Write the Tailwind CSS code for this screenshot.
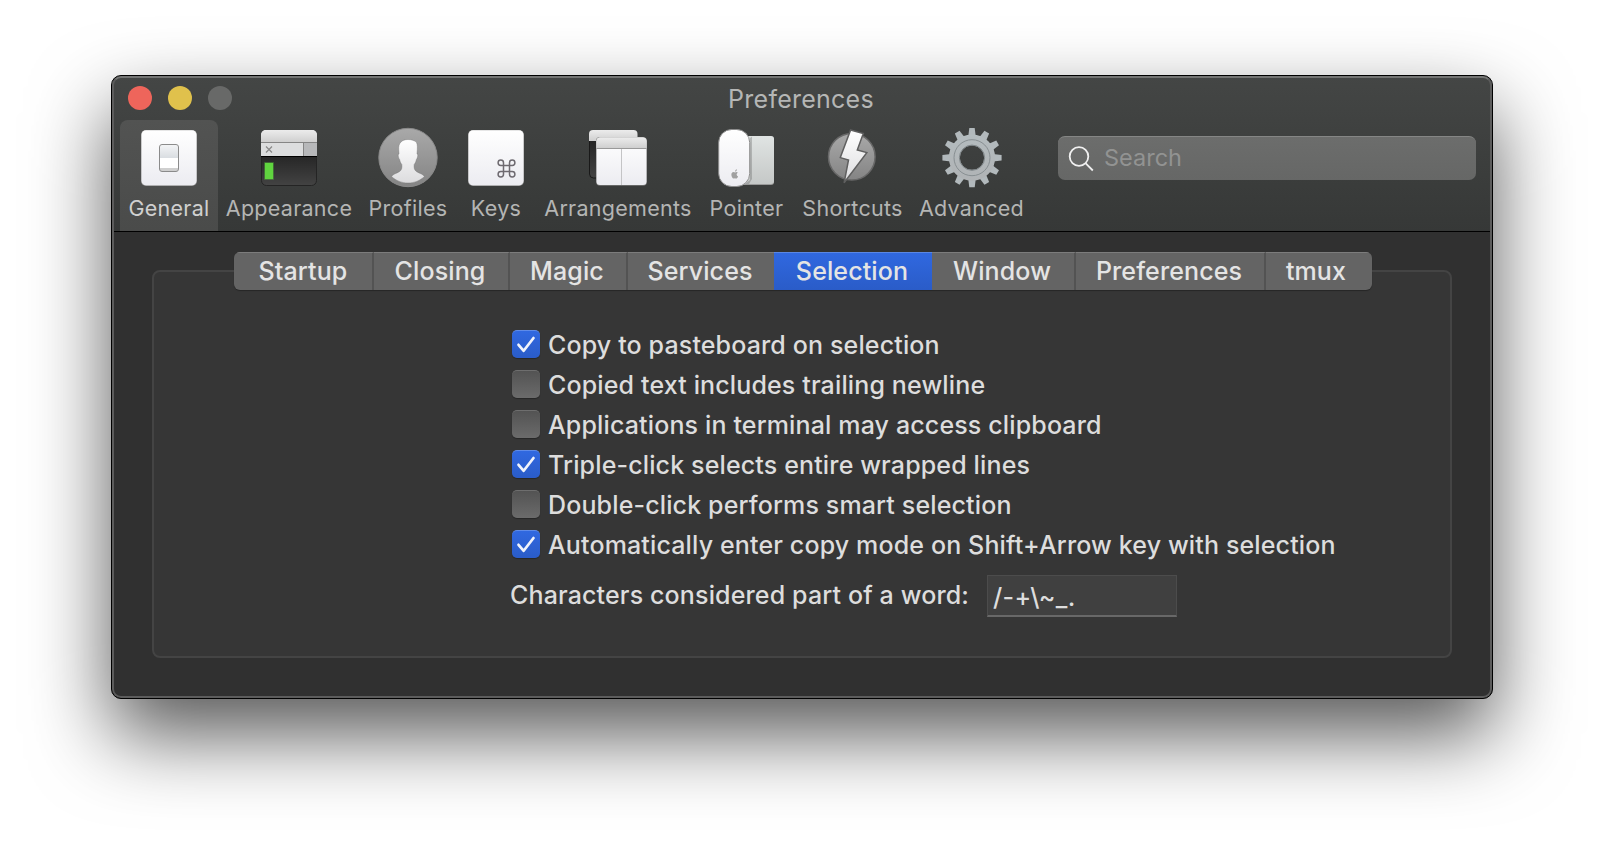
<!DOCTYPE html>
<html lang="en">
<head>
<meta charset="utf-8">
<title>Preferences</title>
<script src="https://cdn.jsdelivr.net/npm/@tailwindcss/browser@4"></script>
</head>
<body class="h-[846px] w-[1604px] overflow-hidden bg-white pt-[75px] pl-[111px] font-[Inter,sans-serif]">
<main class="relative flex h-[624px] w-[1382px] flex-col overflow-hidden rounded-[10px] border border-black bg-[#303030] shadow-[0_36px_80px_rgba(0,0,0,0.66)]">
  <div class="pointer-events-none absolute inset-0 z-10 rounded-[9px] border-2 border-[#5c5c5c] border-t-[#747574]"></div>

  <header class="h-[156px] shrink-0 border-b border-black bg-linear-to-b from-[#444645] to-[#363837]">
    <div class="grid h-11 grid-cols-[1fr_auto_1fr] items-center pl-4">
      <div class="flex gap-4">
        <span class="size-6 rounded-full bg-[#ee655b]"></span>
        <span class="size-6 rounded-full bg-[#e0c14c]"></span>
        <span class="size-6 rounded-full bg-[#686968]"></span>
      </div>
      <h1 class="pt-0.5 pr-[18px] text-[25px] leading-7 tracking-[0.25px] text-[#b5b6b5]">Preferences</h1>
    </div>
    <div class="flex h-[111px] pl-2">
      <nav class="flex text-[21.5px] leading-7 tracking-[0.28px] whitespace-nowrap text-[#b4b5b4]">
        <a class="flex w-[98px] flex-col items-center rounded-t-lg bg-linear-to-b from-[#525352] to-[#4a4b4a] pt-1.5 text-[#d0d0d0]">
          <svg class="size-16" viewBox="0 0 64 64"><defs><linearGradient id="key" x2="0" y2="1"><stop stop-color="#fff"/><stop offset="1" stop-color="#ececf1"/></linearGradient><linearGradient id="bar" x2="0" y2="1"><stop stop-color="#ececec"/><stop offset="1" stop-color="#cfcfcf"/></linearGradient><linearGradient id="sw" x2="0" y2="1"><stop stop-color="#f3f4f6"/><stop offset="1" stop-color="#d9dde1"/></linearGradient></defs>
            <rect x="4" y="4" width="56" height="56" rx="5" fill="#9a9a9a"/><rect x="4.500" y="4.200" width="55" height="55" rx="4.500" fill="url(#key)"/>
            <rect x="22.500" y="18.500" width="19" height="27" rx="2.500" fill="#fff"/><path d="M23 32V21a2 2 0 0 1 2-2h14a2 2 0 0 1 2 2v11z" fill="url(#sw)"/><path d="M23 42h18v1.500a2 2 0 0 1-2 2H25a2 2 0 0 1-2-2z" fill="#cfcfcf"/><rect x="22.500" y="18.500" width="19" height="27" rx="2.500" fill="none" stroke="#8b8b8b"/></svg>
          <span class="mt-1">General</span></a>
        <a class="flex w-[142px] flex-col items-center pt-1.5">
          <svg class="size-16" viewBox="0 0 64 64"><defs><linearGradient id="term" x2="0" y2="1"><stop stop-color="#1e1e1e"/><stop offset="1" stop-color="#434343"/></linearGradient></defs>
            <rect x="4.500" y="22" width="55" height="37.500" rx="5" fill="url(#term)" stroke="#242424"/><path d="M4 30V9a5 5 0 0 1 5-5h46a5 5 0 0 1 5 5v21z" fill="#dcddde"/><path d="M4 16V9a5 5 0 0 1 5-5h46a5 5 0 0 1 5 5v7z" fill="url(#bar)"/><path d="M46.500 17H60v13H46.500z" fill="#b7b8ba"/><path d="M4 16.500h56M46.500 17v13" stroke="#858585" fill="none"/><path d="M4 30.500h56" stroke="#000"/><path d="M9 20.500l6 6m0-6l-6 6" stroke="#888" stroke-width="1.200"/><rect x="7" y="36" width="10" height="18" rx="1" fill="#5cd53b" opacity=".35"/><rect x="8" y="37" width="8" height="16" fill="#60d43f"/></svg>
          <span class="mt-1">Appearance</span></a>
        <a class="flex w-[96px] flex-col items-center pt-1.5">
          <svg class="size-16" viewBox="0 0 64 64"><defs><linearGradient id="disc" x2="0" y2="1"><stop stop-color="#a9a9a9"/><stop offset="1" stop-color="#848484"/></linearGradient><linearGradient id="bust" x2="0" y2="1"><stop stop-color="#fff"/><stop offset="1" stop-color="#dcdcde"/></linearGradient></defs>
            <circle cx="32" cy="31.500" r="29.200" fill="url(#disc)" stroke="#8a8a8a"/>
            <path d="M32 13.500c4.200 0 6 1.400 7.200 1.800 2 1 2.400 4 2.100 8.400l-.3 4.300c1.300 0 .9 3.300-.6 5.500-.5 2.300-1 3.400-2.200 5-.4 3.600.2 5.700 2.500 7.200 2.900 1.700 6.200 2.400 7.800 4.700C44 54.700 38.200 57 32 57s-12-2.300-16.500-6.600c1.600-2.300 4.900-3 7.800-4.700 2.300-1.500 2.900-3.600 2.500-7.200-1.200-1.600-1.700-2.700-2.200-5-1.500-2.200-1.900-5.500-.6-5.500l-.3-4.300c-.5-6.500 3-10.200 9.300-10.200z" fill="url(#bust)" stroke="#6f6f6f" stroke-opacity=".5" stroke-width=".8"/></svg>
          <span class="mt-1">Profiles</span></a>
        <a class="flex w-[80px] flex-col items-center pt-1.5">
          <svg class="size-16" viewBox="0 0 64 64"><rect x="4" y="4" width="56" height="56" rx="5" fill="#9a9a9a"/><rect x="4.500" y="4.200" width="55" height="55" rx="4.500" fill="url(#key)"/>
            <path d="M39.500 39.500h6v6h-6zM39.500 39.500h-2.700a2.700 2.700 0 1 1 2.700-2.700zM45.500 39.500v-2.700a2.700 2.700 0 1 1 2.700 2.700zM45.500 45.500h2.700a2.700 2.700 0 1 1-2.700 2.700zM39.500 45.500v2.700a2.700 2.700 0 1 1-2.700-2.700z" fill="none" stroke="#6e6a70" stroke-width="1.500"/></svg>
          <span class="mt-1">Keys</span></a>
        <a class="flex w-[164px] flex-col items-center pt-1.5">
          <svg class="size-16" viewBox="0 0 64 64"><rect x="3.500" y="4.500" width="47" height="47.500" rx="4" fill="url(#term)" stroke="#191919"/><path d="M3 15V8a4 4 0 0 1 4-4h40.500a4 4 0 0 1 4 4v7z" fill="url(#bar)"/><rect x="10" y="11" width="51" height="48.800" rx="4" fill="#777"/><rect x="10.500" y="11.500" width="50" height="47.500" rx="3.500" fill="url(#key)"/><path d="M10.500 22v-6.500a4 4 0 0 1 4-4h42a4 4 0 0 1 4 4V22z" fill="url(#bar)"/><path d="M10.500 22.500h50" stroke="#999"/><path d="M35.500 23v36" stroke="#c4c4c6"/></svg>
          <span class="mt-1">Arrangements</span></a>
        <a class="flex w-[93px] flex-col items-center pt-1.5">
          <svg class="size-16" viewBox="0 0 64 64"><defs><linearGradient id="pad" x2="0" y2="1"><stop stop-color="#e0e4e3"/><stop offset="1" stop-color="#c5c8c7"/></linearGradient></defs>
            <rect x="20" y="10.500" width="39" height="48.500" rx="3" fill="#999"/><rect x="20" y="10" width="39" height="48" rx="3" fill="url(#pad)"/><path d="M35 12v42l-5 4h4l3-5V10.500z" fill="#555" opacity=".3"/><rect x="3.700" y="3.500" width="31" height="57" rx="13" fill="url(#key)" stroke="#8d8d8d"/>
            <path transform="translate(4.100 8.600) scale(.84)" d="M22.200 45.300c-1 .6-1.400 1.400-1.300 2.400.1 1 .7 1.700 1.700 2.100-.6 1.500-1.300 2.500-2.200 2.500-.6 0-.9-.4-1.600-.4s-1 .4-1.500.4c-1.300 0-2.700-2.500-2.700-4.600 0-2 1.200-3.200 2.500-3.200.8 0 1.300.5 1.900.5.500 0 1.100-.5 2-.5.500 0 1 .3 1.200.8zM19 44c0-1.500 1-2.500 2.200-2.800C21.200 42.800 20.200 43.900 19 44z" fill="#a0a0a0"/></svg>
          <span class="mt-1">Pointer</span></a>
        <a class="flex w-[119px] flex-col items-center pt-1.5">
          <svg class="size-16" viewBox="0 0 64 64"><g transform="translate(-.7 0)"><circle cx="31.500" cy="30.700" r="23.300" fill="url(#disc)" stroke="#686868" stroke-width="1.500"/><path d="M30.300 4l12.700 3.500-6 16.600 9.500 2.500-22.700 30.200L28.200 34l-8.200-2.400z" fill="url(#bust)" stroke="#5f5f5f" stroke-width="1.500"/></g></svg>
          <span class="mt-1">Shortcuts</span></a>
        <a class="flex w-[119px] flex-col items-center pt-1.5">
          <svg class="size-16" viewBox="0 0 64 64"><defs><linearGradient id="gear" gradientUnits="userSpaceOnUse" x1="0" y1="-24" x2="0" y2="24"><stop stop-color="#b4bcbf"/><stop offset="1" stop-color="#b0b3b5"/></linearGradient><path id="tooth" d="M-3.800 -21L-2.700 -29.600H2.700L3.800 -21z"/></defs>
            <g transform="translate(32 31.700)"><g fill="#b2b9bc"><use href="#tooth"/><use href="#tooth" transform="rotate(30)"/><use href="#tooth" transform="rotate(60)"/><use href="#tooth" transform="rotate(90)"/><use href="#tooth" transform="rotate(120)"/><use href="#tooth" transform="rotate(150)"/><use href="#tooth" transform="rotate(180)"/><use href="#tooth" transform="rotate(210)"/><use href="#tooth" transform="rotate(240)"/><use href="#tooth" transform="rotate(270)"/><use href="#tooth" transform="rotate(300)"/><use href="#tooth" transform="rotate(330)"/></g>
            <circle r="17.600" fill="none" stroke="url(#gear)" stroke-width="11"/><circle r="18" fill="none" stroke="#888f92" stroke-width="1"/><circle r="12.600" fill="none" stroke="#7c8386" stroke-width="1"/></g></svg>
          <span class="mt-1">Advanced</span></a>
      </nav>
      <div class="mt-4 ml-[27px] flex h-11 w-[418px] items-center rounded-[7px] border-t border-[#858685] bg-linear-to-b from-[#6c6d6c] to-[#666766] pl-2.5 text-[23.5px] leading-7 text-[#929392]">
        <svg class="size-7" viewBox="0 0 28 28" fill="none" stroke="#f0f0f0" stroke-width="1.800"><circle cx="11" cy="11.500" r="9.300"/><path d="M17.500 18.200l7.300 7.300"/></svg>
        <span class="ml-2 pb-0.5">Search</span>
      </div>
    </div>
  </header>

  <section class="flex flex-1 flex-col px-10 pt-5">
    <div class="relative z-10 ml-[82px] flex h-[38px] w-[1138px] overflow-hidden rounded-[6px] bg-[#646464] text-center text-[25px] leading-[37px] font-medium tracking-[0.12px] text-[#e4e4e4] shadow-[0_1px_1px_rgba(0,0,0,0.3)]">
      <div class="w-[140px] border-t border-r-2 border-t-[#7c7c7c] border-r-[#535353]">Startup</div>
      <div class="w-[136px] border-t border-r-2 border-t-[#7c7c7c] border-r-[#535353] pr-0.5">Closing</div>
      <div class="w-[118px] border-t border-r-2 border-t-[#7c7c7c] border-r-[#535353] pr-0.5">Magic</div>
      <div class="w-[146px] border-t border-[#7c7c7c] pr-0.5">Services</div>
      <div class="w-[158px] border-t border-[#5a87e4] bg-linear-to-b from-[#3068e0] to-[#2a5cc8] pr-0.5">Selection</div>
      <div class="w-[144px] border-t border-r-2 border-t-[#7c7c7c] border-r-[#535353] pr-0.5">Window</div>
      <div class="w-[190px] border-t border-r-2 border-t-[#7c7c7c] border-r-[#535353] pr-0.5">Preferences</div>
      <div class="w-[106px] border-t border-[#7c7c7c] pr-1.5">tmux</div>
    </div>
    <div class="-mt-5 h-[388px] w-[1300px] rounded-lg border-2 border-[#444444] bg-[#363636] pt-[58px] pl-[358px] text-[25px] leading-7 font-medium tracking-[0.14px] whitespace-nowrap text-[#dddddd]">
      <div class="flex flex-col gap-3">
        <label class="flex h-7 gap-2"><svg class="size-7 rounded-[5px] border-t border-[#5f8be8] bg-linear-to-b from-[#3068e0] to-[#2a5cc8] shadow-[0_1px_1px_rgba(0,0,0,0.3)]" viewBox="0 0 28 27"><path d="M6.500 13.800l5.200 6L21.500 7" fill="none" stroke="#f0f3fb" stroke-width="2.700" stroke-linecap="round" stroke-linejoin="round"/></svg><span class="pt-px">Copy to pasteboard on selection</span></label>
        <label class="flex h-7 gap-2"><span class="size-7 rounded-[5px] border-t border-[#6e6e6e] bg-linear-to-b from-[#535353] to-[#6b6b6b] shadow-[0_1px_1px_rgba(0,0,0,0.3)]"></span><span class="pt-px">Copied text includes trailing newline</span></label>
        <label class="flex h-7 gap-2"><span class="size-7 rounded-[5px] border-t border-[#6e6e6e] bg-linear-to-b from-[#535353] to-[#6b6b6b] shadow-[0_1px_1px_rgba(0,0,0,0.3)]"></span><span class="pt-px">Applications in terminal may access clipboard</span></label>
        <label class="flex h-7 gap-2"><svg class="size-7 rounded-[5px] border-t border-[#5f8be8] bg-linear-to-b from-[#3068e0] to-[#2a5cc8] shadow-[0_1px_1px_rgba(0,0,0,0.3)]" viewBox="0 0 28 27"><path d="M6.500 13.800l5.200 6L21.500 7" fill="none" stroke="#f0f3fb" stroke-width="2.700" stroke-linecap="round" stroke-linejoin="round"/></svg><span class="pt-px">Triple-click selects entire wrapped lines</span></label>
        <label class="flex h-7 gap-2"><span class="size-7 rounded-[5px] border-t border-[#6e6e6e] bg-linear-to-b from-[#535353] to-[#6b6b6b] shadow-[0_1px_1px_rgba(0,0,0,0.3)]"></span><span class="pt-px">Double-click performs smart selection</span></label>
        <label class="flex h-7 gap-2"><svg class="size-7 rounded-[5px] border-t border-[#5f8be8] bg-linear-to-b from-[#3068e0] to-[#2a5cc8] shadow-[0_1px_1px_rgba(0,0,0,0.3)]" viewBox="0 0 28 27"><path d="M6.500 13.800l5.200 6L21.500 7" fill="none" stroke="#f0f3fb" stroke-width="2.700" stroke-linecap="round" stroke-linejoin="round"/></svg><span class="pt-px">Automatically enter copy mode on Shift+Arrow key with selection</span></label>
      </div>
      <div class="mt-[17px] -ml-0.5 flex h-[42px]">
        <span class="w-[477px] pt-[6px]">Characters considered part of a word:</span>
        <span class="w-[190px] border border-b-2 border-[#4c4c4c] border-b-[#686868] bg-[#404040] pt-[7px] pl-[5px] tracking-[0.3px]">/-+\~_.</span>
      </div>
    </div>
  </section>
</main>
</body>
</html>
